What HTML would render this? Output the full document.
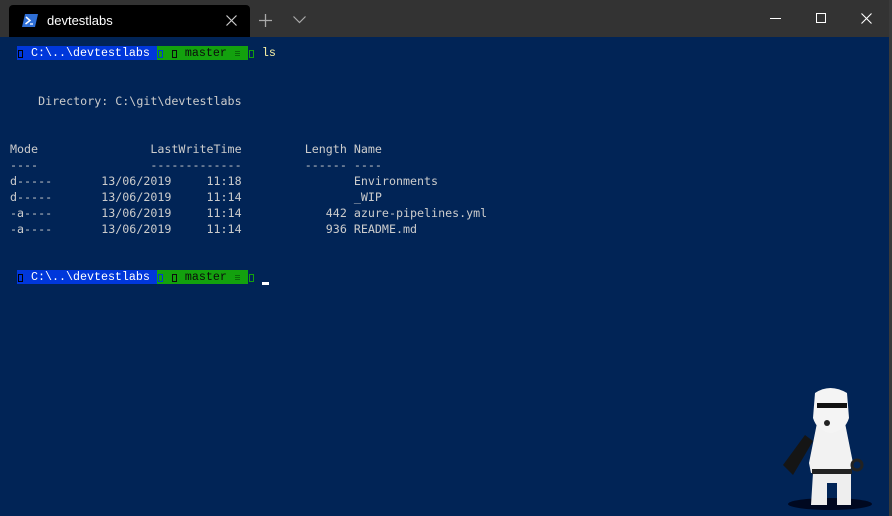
<!DOCTYPE html>
<html><head><style>
body{margin:0;width:892px;height:516px;background:#012456;overflow:hidden;position:relative;font-family:"Liberation Mono",monospace;}
.tb{position:absolute;left:0;top:0;width:892px;height:37px;background:#333;}
.tab{position:absolute;left:9px;top:5px;width:241px;height:32px;background:#000;border-radius:4px 4px 0 0;}
.tab .t{position:absolute;left:38px;top:8px;color:#fff;font:13px "Liberation Sans",sans-serif;}
.border{position:absolute;right:0;top:0;width:3px;height:516px;background:#3a3a3a;}
pre{position:absolute;left:10px;margin:0;font-size:11.67px;line-height:16px;color:#cccccc;}
.row{position:absolute;left:17px;height:16px;font-size:11.67px;line-height:16px;white-space:pre;}
.b{background:#0037da;color:#fff;}
.g{background:#13a10e;color:#0c0c0c;}
.gg{color:#13a10e;}
.y{color:#f9f1a5;}
.q{display:inline-block;width:7px;height:16px;vertical-align:top;position:relative;}
.q::after{content:"";position:absolute;left:1px;top:5px;width:3px;height:6px;border:1px solid currentColor;}
.eq{display:inline-block;width:7px;height:16px;vertical-align:top;position:relative;}
.eq::after{content:"";position:absolute;left:1px;top:6px;width:5px;height:6px;background:repeating-linear-gradient(#0a6a08 0 1px,#13a10e 1px 2px);}
</style></head><body>
<div class="tb">
 <div class="tab">
  <svg style="position:absolute;left:13px;top:9px" width="16" height="13" viewBox="0 0 16 13"><path d="M3 0H16L13 13H0Z" fill="#2f6fd6"/><path d="M4 3L8 6.5L3.5 10" stroke="#fff" stroke-width="1.5" fill="none"/><path d="M8 10H11" stroke="#fff" stroke-width="1.3"/></svg>
  <div class="t">devtestlabs</div>
  <svg style="position:absolute;left:217px;top:10px" width="11" height="11"><path d="M0.5 0.5L10.5 10.5M10.5 0.5L0.5 10.5" stroke="#ccc" stroke-width="1.2"/></svg>
 </div>
 <svg style="position:absolute;left:259px;top:14px" width="13" height="13"><path d="M6.5 0V13M0 6.5H13" stroke="#aaa" stroke-width="1.3"/></svg>
 <svg style="position:absolute;left:293px;top:16px" width="13" height="8"><path d="M0.5 0.5L6.5 6.5L12.5 0.5" stroke="#aaa" stroke-width="1.2" fill="none"/></svg>
 <div style="position:absolute;left:770px;top:18px;width:11px;height:1px;background:#fff"></div>
 <div style="position:absolute;left:816px;top:13px;width:8px;height:8px;border:1px solid #fff"></div>
 <svg style="position:absolute;left:861px;top:13px" width="11" height="11"><path d="M0.5 0.5L10.5 10.5M10.5 0.5L0.5 10.5" stroke="#fff" stroke-width="1.1"/></svg>
</div>
<div class="row" style="top:45px"><span class="b"><span class="q" style="color:#000"></span> C:\..\devtestlabs </span><span class="g"><span class="q" style="color:#0037da"></span> <span class="q"></span> master <span class="eq"></span> </span><span class="gg"><span class="q"></span></span> <span class="y">ls</span></div>
<pre style="top:93px">    Directory: C:\git\devtestlabs</pre>
<pre style="top:141px">Mode                LastWriteTime         Length Name
----                -------------         ------ ----
d-----       13/06/2019     11:18                Environments
d-----       13/06/2019     11:14                _WIP
-a----       13/06/2019     11:14            442 azure-pipelines.yml
-a----       13/06/2019     11:14            936 README.md</pre>
<div class="row" style="top:269px"><span class="b"><span class="q" style="color:#000"></span> C:\..\devtestlabs </span><span class="g"><span class="q" style="color:#0037da"></span> <span class="q"></span> master <span class="eq"></span> </span><span class="gg"><span class="q"></span></span></div>
<div style="position:absolute;left:262px;top:282px;width:7px;height:3px;background:#fff"></div>
<svg style="position:absolute;left:775px;top:383px" width="110" height="130" viewBox="0 0 110 130">
 <ellipse cx="55" cy="121" rx="42" ry="6" fill="#000820"/>
 <path d="M42 40 Q55 34 70 40 L78 80 L74 90 L36 90 L34 80Z" fill="#f2f2f2"/>
 <path d="M38 90H76V122H62V100H52V122H36Z" fill="#eee"/>
 <rect x="37" y="86" width="40" height="5" fill="#222"/>
 <path d="M40 10 Q55 0 72 10 L74 35 Q70 48 56 50 Q42 48 38 35Z" fill="#f4f4f4"/>
 <rect x="42" y="20" width="30" height="5" fill="#111"/>
 <circle cx="52" cy="40" r="3" fill="#222"/>
 <path d="M8 82 L30 52 L38 58 L18 92Z" fill="#151515"/>
 <circle cx="82" cy="82" r="5" fill="none" stroke="#222" stroke-width="3"/>
</svg>
<div class="border"></div>
</body></html>
